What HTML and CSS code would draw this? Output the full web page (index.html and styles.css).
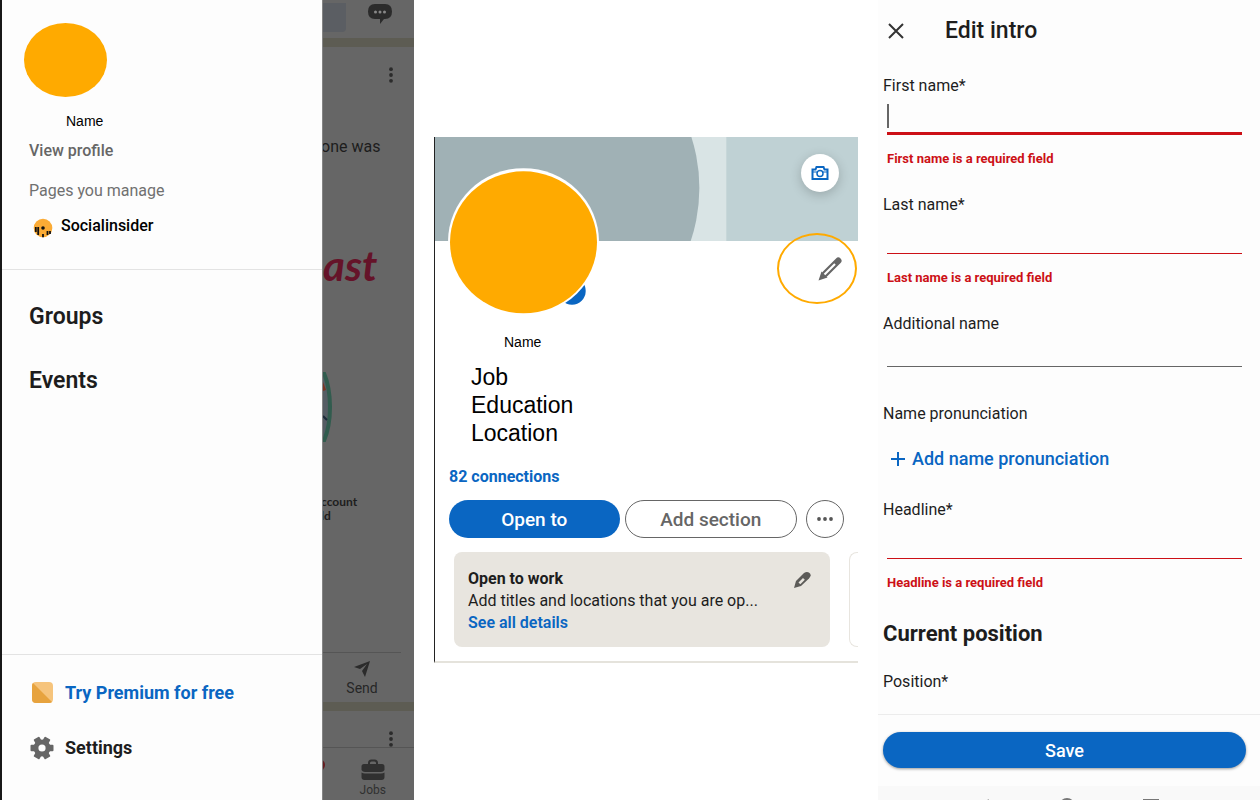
FILE: index.html
```html
<!DOCTYPE html>
<html lang="en">
<head>
  <meta charset="UTF-8" />
  <meta name="viewport" content="width=device-width, initial-scale=1.0"/>
  <title>Edit your profile name</title>
  <link rel="stylesheet" href="styles.css">
</head>
<body>
  <div class="screens">

    <!-- Side menu -->
    <section class="menu-screen">
      <nav class="drawer">
        <div class="drawer-top">
          <div class="avatar"></div>
          <span class="small-name">Name</span>
          <a class="view-profile" href="#">View profile</a>
          <span class="pages-title">Pages you manage</span>
          <a class="page-link" href="#">
            <svg width="20" height="20" viewBox="0 0 20 20">
              <circle cx="10" cy="10" r="9.3" fill="#fbab35"/>
              <circle cx="10" cy="10" r="1.800" fill="#111"/>
              <path d="M2.800 9v5M5.200 9v8M10 16v3.300M14.500 13v4M17 13v3" stroke="#111" stroke-width="1.800"/>
            </svg>
            Socialinsider
          </a>
        </div>
        <div class="drawer-links">
          <a href="#">Groups</a>
          <a href="#">Events</a>
        </div>
        <div class="drawer-bottom">
          <a class="premium" href="#">
            <svg width="24" height="24" viewBox="0 0 24 24">
              <rect x="2" y="1" width="21" height="21" rx="4" fill="#f6c47c"/>
              <path d="M3 2l19 19q-1 1-3 1H6q-4 0-4-4V5q0-2 1-3z" fill="#e7a33e"/>
            </svg>
            Try Premium for free
          </a>
          <a href="#">
            <svg width="24" height="24" viewBox="0 0 24 24">
              <g fill="#666">
                <circle cx="12" cy="12" r="8.600"/>
                <rect x="0.500" y="8.700" width="23" height="6.600" rx="1"/>
                <rect x="0.500" y="8.700" width="23" height="6.600" rx="1" transform="rotate(60 12 12)"/>
                <rect x="0.500" y="8.700" width="23" height="6.600" rx="1" transform="rotate(120 12 12)"/>
              </g>
              <circle cx="12" cy="12" r="3.600" fill="#fdfdfd"/>
            </svg>
            Settings
          </a>
        </div>
      </nav>

      <div class="feed">
        <div class="feed-header">
          <span class="search-end"></span>
          <svg width="26" height="22" viewBox="0 0 26 22">
            <path d="M8 1h10q7 0 7 7.500T18 16h-1l-4 5v-5H8q-7 0-7-7.500T8 1z" fill="#2b2b2b"/>
            <g fill="#888"><circle cx="8.500" cy="9" r="1.500"/><circle cx="13" cy="9" r="1.500"/><circle cx="17.500" cy="9" r="1.500"/></g>
          </svg>
        </div>
        <div class="post">
          <svg class="dots" width="6" height="16" viewBox="0 0 6 16" fill="#2b2b2b"><circle cx="3" cy="2.200" r="1.900"/><circle cx="3" cy="8" r="1.900"/><circle cx="3" cy="13.800" r="1.900"/></svg>
          <p class="post-text">one was</p>
          <p class="post-script">ast</p>
          <svg class="post-badge" width="10" height="70" viewBox="0 0 10 70">
            <ellipse cx="-18" cy="35" rx="25" ry="52" fill="#555d64" stroke="#315c4e" stroke-width="4"/>
            <path d="M0 10l3 8-3 1z" fill="#7a3524"/>
            <path d="M0 44l4 4" stroke="#1c2b3a" stroke-width="2"/>
          </svg>
          <p class="post-caption">ccount<br>ld</p>
          <button class="send">
            <svg width="18" height="18" viewBox="0 0 18 18"><path d="M17 1L12 17 9 11l5-7-7 5-6-2z" fill="#2b2b2b"/></svg>
            Send
          </button>
        </div>
        <div class="next-post">
          <svg class="dots" width="6" height="16" viewBox="0 0 6 16" fill="#2b2b2b"><circle cx="3" cy="2.200" r="1.900"/><circle cx="3" cy="8" r="1.900"/><circle cx="3" cy="13.800" r="1.900"/></svg>
        </div>
        <div class="tab-bar">
          <svg class="notice" width="3" height="12" viewBox="0 0 3 12"><circle cx="-4" cy="6" r="6" fill="#651c20"/></svg>
          <a class="jobs" href="#">
            <svg width="24" height="22" viewBox="0 0 24 22">
              <path d="M8 6V4q0-2.500 2.500-2.500h3Q16 1.500 16 4v2" fill="none" stroke="#303030" stroke-width="2"/>
              <path d="M3 5h18q2.500 0 2.500 2.500V11q-1 2-3.500 2H4q-2.500 0-3.500-2V7.500Q.5 5 3 5zM.5 13.500Q2 14.500 4 14.500h16q2 0 3.500-1V18q0 3-3 3h-17q-3 0-3-3z" fill="#303030"/>
            </svg>
            Jobs
          </a>
        </div>
      </div>
    </section>

    <!-- Profile -->
    <section class="profile">
      <div class="banner">
        <svg class="banner-art" viewBox="0 0 424 104" preserveAspectRatio="none">
          <rect width="424" height="104" fill="#bfd1d4"/>
          <rect width="292" height="104" fill="#d9e4e5"/>
          <circle cx="99" cy="51" r="166" fill="#a0b1b5"/>
        </svg>
        <button class="camera" aria-label="Change cover">
          <svg width="18" height="14" viewBox="0 0 18 14" fill="none" stroke="#0a66c2">
            <path d="M1.500 3.500h3l1-2.500h7l1 2.500h3V13h-15z" stroke-width="2"/>
            <circle cx="9" cy="7.500" r="3" stroke-width="1.500"/>
            <path d="M2 6h4M12 6h4"/>
          </svg>
        </button>
        <svg class="photo" width="152" height="148" viewBox="0 0 152 148">
          <circle cx="124" cy="123" r="13.700" fill="#0a66c2"/>
          <ellipse cx="75.500" cy="73.700" rx="75.500" ry="73.500" fill="#fff"/>
          <ellipse cx="75.500" cy="74.300" rx="73.500" ry="71" fill="#fa0"/>
        </svg>
        <button class="edit" aria-label="Edit intro">
          <svg width="24" height="24" viewBox="0 0 24 24">
            <path d="M20.300 3.700L7 17" stroke="#666" stroke-width="6.400" stroke-linecap="round"/>
            <path d="M.5 23.500L3.500 14.500 9.500 20.500z" fill="#666"/>
            <path d="M17 7L6.500 17.500" stroke="#fff" stroke-width="2.200"/>
          </svg>
        </button>
      </div>
      <div class="profile-info">
        <span class="small-name">Name</span>
        <p class="about">Job<br>Education<br>Location</p>
        <a class="connections" href="#">82 connections</a>
        <div class="buttons">
          <button class="primary">Open to</button>
          <button class="outline">Add section</button>
          <button class="more" aria-label="More">
            <svg width="16" height="4" viewBox="0 0 16 4" fill="#555"><circle cx="2" cy="2" r="1.900"/><circle cx="8" cy="2" r="1.900"/><circle cx="14" cy="2" r="1.900"/></svg>
          </button>
        </div>
      </div>
      <div class="cards">
        <div class="work-card">
          <div class="work-text">
            <h3>Open to work</h3>
            <p>Add titles and locations that you are op...</p>
            <a href="#">See all details</a>
          </div>
          <button class="card-edit" aria-label="Edit">
            <svg width="18" height="18" viewBox="0 0 18 18">
              <path d="M1 17L3 10 11 2Q14 0 16.500 2T16 7.500L8 15z" fill="#5c5b58"/>
              <path d="M5.500 11.500L10 7l1.800 1.800-4.500 4.500z" fill="#e8e5df"/>
            </svg>
          </button>
        </div>
        <div class="next-card"></div>
      </div>
    </section>

    <!-- Edit form -->
    <form class="edit-form">
      <header class="form-header">
        <button type="button" class="close" aria-label="Close">
          <svg width="16" height="16" viewBox="0 0 16 16"><path d="M1 1l14 14M15 1L1 15" stroke="#333" stroke-width="2"/></svg>
        </button>
        <h1>Edit intro</h1>
      </header>
      <div class="fields">
        <div class="field">
          <label for="firstName">First name*</label>
          <input class="invalid active" type="text" id="firstName">
          <p class="error">First name is a required field</p>
        </div>
        <div class="field">
          <label for="lastName">Last name*</label>
          <input class="invalid" type="text" id="lastName">
          <p class="error">Last name is a required field</p>
        </div>
        <div class="field">
          <label for="additionalName">Additional name</label>
          <input class="short" type="text" id="additionalName">
        </div>
        <div class="pronunciation">
          <p>Name pronunciation</p>
          <button type="button" class="add">
            <svg width="14" height="14" viewBox="0 0 14 14"><path d="M7 0v14M0 7h14" stroke="#0a66c2" stroke-width="2"/></svg>
            Add name pronunciation
          </button>
        </div>
        <div class="field">
          <label for="headline">Headline*</label>
          <input class="invalid" type="text" id="headline">
          <p class="error">Headline is a required field</p>
        </div>
        <div class="position">
          <h2>Current position</h2>
          <p>Position*</p>
        </div>
      </div>
      <footer class="form-footer">
        <button type="button" class="primary save">Save</button>
      </footer>
      <div class="phone-nav">
        <svg width="180" height="14" viewBox="0 0 180 14" fill="none" stroke="#777" stroke-width="2">
          <path d="M10 2L1 8l9 6"/>
          <circle cx="88" cy="8" r="7"/>
          <path d="M165 14V2h14v12"/>
        </svg>
      </div>
    </form>

  </div>
</body>
</html>
```
FILE: styles.css
```css
* {
  box-sizing: border-box;
}
body {
  margin: 0;
  font-family: Roboto, sans-serif;
  font-size: 16px;
  line-height: 20px;
  color: #1d1d1d;
  background: white;
}
h1, h2, h3, p {
  margin: 0;
}
a {
  color: inherit;
  text-decoration: none;
}
button {
  padding: 0;
  border: none;
  background: none;
  font-family: inherit;
  cursor: pointer;
}
svg {
  display: block;
  flex-shrink: 0;
}
.screens {
  display: grid;
  grid-template-columns: 414fr 424fr 382fr;
  column-gap: 20px;
  height: 100vh;
  overflow: hidden;
}
.small-name {
  font-family: "Liberation Sans", Arial, sans-serif;
  font-size: 14px;
  color: black;
}

/* side menu */
.menu-screen {
  display: grid;
  grid-template-columns: 7fr 2fr;
  min-width: 0;
  min-height: 0;
  background: #666;
}
.drawer {
  display: flex;
  flex-direction: column;
  min-width: 0;
  border-left: 2px solid #181818;
  background: #fdfdfd;
}
.drawer-top {
  display: flex;
  flex-direction: column;
  align-items: flex-start;
  padding: 23px 22px 31px 27px;
  border-bottom: 1px solid #e3e3e3;
}
.drawer-top .small-name {
  margin: 14px 0 0 37px;
}
.avatar {
  width: 83px;
  height: 74px;
  margin-left: -5px;
  border-radius: 50%;
  background: #fa0;
}
.view-profile {
  margin-top: 10px;
  font-weight: 500;
  color: #666;
}
.pages-title {
  margin-top: 20px;
  color: #707070;
}
.page-link {
  display: flex;
  align-items: flex-start;
  gap: 8px;
  margin: 15px 0 0 4px;
  font-weight: 500;
  color: black;
}
.page-link svg {
  margin-top: 2px;
}
.drawer-links {
  display: flex;
  flex: 1;
  flex-direction: column;
  align-items: flex-start;
  gap: 36px;
  padding: 33px 27px;
  font-size: 23px;
  line-height: 28px;
  font-weight: 600;
}
.drawer-bottom {
  display: flex;
  flex-direction: column;
  gap: 31px;
  padding: 26px 28px 40px;
  border-top: 1px solid #e3e3e3;
  font-size: 18px;
  line-height: 24px;
  font-weight: 700;
}
.drawer-bottom a {
  display: flex;
  align-items: center;
  gap: 11px;
}
.drawer-bottom .premium {
  color: #0a66c2;
}

/* dimmed feed behind the menu */
.feed {
  display: flex;
  flex-direction: column;
  min-width: 0;
  border-left: 1px solid #858585;
  overflow: hidden;
}
.feed-header {
  display: flex;
  justify-content: space-between;
  height: 47px;
  padding: 3px 21px 0 0;
  border-bottom: 9px solid #5d5c53;
}
.search-end {
  width: 23px;
  height: 29px;
  border-radius: 0 0 4px 0;
  background: #5b5e63;
}
.post {
  display: flex;
  flex: 1;
  flex-direction: column;
  padding-top: 20px;
  border-bottom: 9px solid #5d5c53;
}
.dots {
  align-self: flex-end;
  margin-right: 20px;
}
.post-text {
  margin-top: 54px;
  margin-left: -2px;
  white-space: nowrap;
}
.post-script {
  margin-top: 83px;
  font-family: Lato, sans-serif;
  font-size: 42px;
  line-height: 50px;
  font-style: italic;
  font-weight: 700;
  color: #651329;
}
.post-badge {
  margin-top: 82px;
}
.post-caption {
  margin-top: 53px;
  margin-left: -2px;
  font-family: Lato, sans-serif;
  font-size: 12px;
  line-height: 14px;
  font-weight: 700;
}
.send {
  display: flex;
  flex-direction: column;
  align-items: center;
  gap: 1px;
  margin: auto 13px 0 0;
  padding: 7px 0 5px;
  border-top: 1px solid #555;
  font-size: 14px;
  line-height: 18px;
  color: #262626;
}
.next-post {
  display: flex;
  flex-direction: column;
  padding-top: 20px;
  border-bottom: 1px solid #555;
}
.tab-bar {
  display: flex;
  align-items: flex-start;
  justify-content: space-between;
  height: 52px;
  padding: 11px 28px 0 0;
}
.jobs {
  display: flex;
  flex-direction: column;
  align-items: center;
  gap: 1px;
  font-size: 12px;
  line-height: 16px;
  color: #303030;
}

/* profile */
.profile {
  align-self: center;
  min-width: 0;
  border-left: 1px solid #222;
  border-bottom: 2px solid #e5e3dc;
  overflow: hidden;
}
.banner {
  position: relative;
  height: 104px;
}
.banner-art {
  width: 100%;
  height: 100%;
}
.camera {
  position: absolute;
  top: 17px;
  right: 19px;
  display: flex;
  align-items: center;
  justify-content: center;
  width: 38px;
  height: 38px;
  border-radius: 50%;
  background: white;
  box-shadow: 0 3px 12px rgba(0,0,0,0.2);
}
.photo {
  position: absolute;
  top: 31px;
  left: 13px;
}
.edit {
  position: absolute;
  top: 96px;
  right: 1px;
  display: flex;
  align-items: center;
  justify-content: flex-end;
  width: 80px;
  height: 71px;
  padding-right: 13px;
  border: 2px solid #fa0;
  border-radius: 50%;
}
.profile-info {
  display: flex;
  flex-direction: column;
  align-items: flex-start;
  padding: 91px 14px 14px;
}
.profile-info .small-name {
  margin-left: 55px;
}
.about {
  margin: 11px 0 20px 22px;
  font-family: "Liberation Sans", Arial, sans-serif;
  font-size: 23px;
  line-height: 28px;
  color: black;
}
.connections {
  font-weight: 700;
  color: #0a66c2;
}
.buttons {
  display: flex;
  align-self: stretch;
  gap: 5px;
  margin-top: 13px;
}
.buttons button {
  flex: 1;
  height: 38px;
  border-radius: 19px;
  font-size: 19px;
  font-weight: 500;
}
.primary {
  background: #0a66c2;
  color: white;
}
.outline {
  border: 1px solid #666;
  color: #666;
}
.buttons .more {
  display: flex;
  flex: 0 0 38px;
  align-items: center;
  justify-content: center;
  margin-left: 4px;
  border: 1px solid #666;
}
.cards {
  display: flex;
  gap: 19px;
  padding: 0 0 14px 19px;
}
.work-card {
  display: flex;
  flex: 1;
  justify-content: space-between;
  min-width: 0;
  padding: 16px 19px 13px 14px;
  border-radius: 8px;
  background: #e8e5df;
  line-height: 22px;
}
.work-text {
  min-width: 0;
}
.work-text h3 {
  font-size: 16px;
  font-weight: 700;
}
.work-text p {
  white-space: nowrap;
}
.work-text a {
  font-weight: 600;
  color: #0a66c2;
}
.card-edit {
  align-self: flex-start;
  margin-top: 3px;
}
.next-card {
  width: 9px;
  border: 1px solid #e8e5df;
  border-right: none;
  border-radius: 8px 0 0 8px;
}

/* edit form */
.edit-form {
  display: flex;
  flex-direction: column;
  min-width: 0;
  min-height: 0;
  background: #fdfdfd;
}
.form-header {
  display: flex;
  align-items: center;
  gap: 41px;
  padding: 17px 10px 31px;
}
.form-header h1 {
  font-size: 23px;
  line-height: 28px;
  font-weight: 500;
}
.fields {
  flex: 1;
  min-height: 0;
  padding: 0 18px 0 5px;
  overflow: hidden;
}
.field {
  display: flex;
  flex-direction: column;
  margin-bottom: 26px;
}
.field input {
  height: 39px;
  margin-left: 4px;
  padding: 0;
  border: none;
  border-bottom: 1px solid #666;
  outline: none;
  background: transparent;
  font-family: inherit;
  font-size: 16px;
}
.field .short {
  height: 33px;
}
.field .invalid {
  border-bottom-color: #cc1016;
}
.field .active {
  border-bottom-width: 3px;
  background: linear-gradient(#666, #666) 0 8px / 2px 24px no-repeat;
}
.error {
  margin: 14px 0 0 4px;
  font-size: 13px;
  font-weight: 700;
  color: #cc1016;
}
.pronunciation {
  padding: 11px 0 31px;
}
.add {
  display: flex;
  align-items: center;
  gap: 7px;
  margin: 25px 0 0 8px;
  font-size: 18px;
  line-height: 20px;
  font-weight: 500;
  color: #0a66c2;
}
.position h2 {
  margin-bottom: 23px;
  font-size: 22px;
  line-height: 30px;
  font-weight: 700;
}
.form-footer {
  display: flex;
  padding: 17px 14px 18px 5px;
  border-top: 1px solid #ececec;
}
.save {
  flex: 1;
  height: 36px;
  border-radius: 18px;
  font-size: 18px;
  font-weight: 500;
  box-shadow: 0 1px 3px rgba(0,0,0,0.4);
}
.phone-nav {
  display: flex;
  justify-content: center;
  height: 14px;
  padding-top: 12px;
  background: #f9f9f9;
  overflow: hidden;
}
```
